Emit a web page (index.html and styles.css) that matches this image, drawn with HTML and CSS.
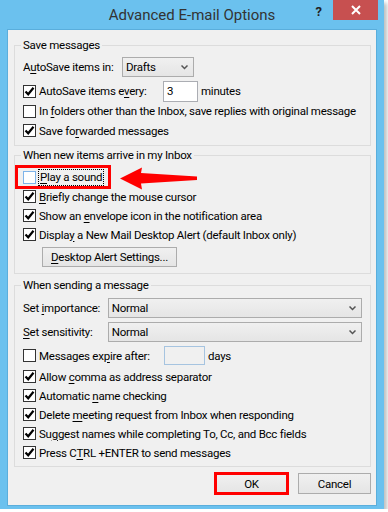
FILE: index.html
```html
<!DOCTYPE html>
<html lang="en">
<head>
  <meta charset="UTF-8">
  <meta name="viewport" content="width=device-width, initial-scale=1.0">
  <title>Advanced E-mail Options</title>
  <link rel="stylesheet" href="styles.css">
</head>
<body>
  <div class="window">
    <div class="titlebar">
      <div class="side"></div>
      <div class="title">Advanced E-mail Options</div>
      <div class="side side-right">
        <span class="help">?</span>
        <span class="close">
          <svg width="10" height="10" viewBox="0 0 10 10"><path d="M1 1 L9 9 M9 1 L1 9" stroke="#fff" stroke-width="2"/></svg>
        </span>
      </div>
    </div>

    <div class="client">
      <!-- Save messages -->
      <fieldset class="group g-save">
        <legend>Save messages</legend>
        <div class="row r-combo">
          <span class="lbl lbl-autosave">A<u>u</u>toSave items in:</span>
          <div class="select s-drafts">Drafts
            <svg class="chev" width="7" height="5" viewBox="0 0 7 5"><path d="M0.5 0.5 L3.5 3.5 L6.5 0.5" fill="none" stroke="#555" stroke-width="1.5"/></svg>
          </div>
        </div>
        <div class="row r-check r-every">
          <span class="cb on"><svg width="11" height="11" viewBox="0 0 11 11"><path d="M1.5 5.5 L4.2 8.3 L9.5 1.8" fill="none" stroke="#000" stroke-width="2.2"/></svg></span>
          <span class="lbl lbl-every">AutoSave items e<u>v</u>ery:</span>
          <div class="input i-every">3</div>
          <span class="after">minutes</span>
        </div>
        <div class="row r-check">
          <span class="cb"></span>
          <span>In <u>f</u>olders other than the Inbox, save replies with original message</span>
        </div>
        <div class="row r-check r-last">
          <span class="cb on"><svg width="11" height="11" viewBox="0 0 11 11"><path d="M1.5 5.5 L4.2 8.3 L9.5 1.8" fill="none" stroke="#000" stroke-width="2.2"/></svg></span>
          <span>Save fo<u>r</u>warded messages</span>
        </div>
      </fieldset>

      <!-- New items -->
      <fieldset class="group g-new">
        <legend>When new items arrive in my Inbox</legend>
        <div class="row r-check r-play">
          <span class="cb focus"></span>
          <span class="focus-lbl"><u>P</u>lay a sound</span>
          <span class="mark"></span>
          <svg class="arrow" width="78" height="25" viewBox="0 0 78 25"><path d="M0 12.5 L22 1.5 L21 7 L77 10.5 L77 14 L21 17.5 L22 23.5 Z" fill="#f00"/></svg>
        </div>
        <div class="row r-check">
          <span class="cb on"><svg width="11" height="11" viewBox="0 0 11 11"><path d="M1.5 5.5 L4.2 8.3 L9.5 1.8" fill="none" stroke="#000" stroke-width="2.2"/></svg></span>
          <span><u>B</u>riefly change the mouse cursor</span>
        </div>
        <div class="row r-check">
          <span class="cb on"><svg width="11" height="11" viewBox="0 0 11 11"><path d="M1.5 5.5 L4.2 8.3 L9.5 1.8" fill="none" stroke="#000" stroke-width="2.2"/></svg></span>
          <span>Show an <u>e</u>nvelope icon in the notification area</span>
        </div>
        <div class="row r-check">
          <span class="cb on"><svg width="11" height="11" viewBox="0 0 11 11"><path d="M1.5 5.5 L4.2 8.3 L9.5 1.8" fill="none" stroke="#000" stroke-width="2.2"/></svg></span>
          <span>Displa<u>y</u> a New Mail Desktop Alert (default Inbox only)</span>
        </div>
        <button class="btn btn-alert"><u>D</u>esktop Alert Settings...</button>
      </fieldset>

      <!-- Sending -->
      <fieldset class="group g-send">
        <legend>When sending a message</legend>
        <div class="row r-combo r-imp">
          <span class="lbl lbl-set">Set <u>i</u>mportance:</span>
          <div class="select s-wide">Normal
            <svg class="chev" width="7" height="5" viewBox="0 0 7 5"><path d="M0.5 0.5 L3.5 3.5 L6.5 0.5" fill="none" stroke="#555" stroke-width="1.5"/></svg>
          </div>
        </div>
        <div class="row r-combo r-sens">
          <span class="lbl lbl-set"><u>S</u>et sensitivity:</span>
          <div class="select s-wide">Normal
            <svg class="chev" width="7" height="5" viewBox="0 0 7 5"><path d="M0.5 0.5 L3.5 3.5 L6.5 0.5" fill="none" stroke="#555" stroke-width="1.5"/></svg>
          </div>
        </div>
        <div class="row r-check r-expire">
          <span class="cb"></span>
          <span class="lbl lbl-expire">Messages ex<u>p</u>ire after:</span>
          <div class="input i-expire"></div>
          <span class="after">days</span>
        </div>
        <div class="row r-check r-allow">
          <span class="cb on"><svg width="11" height="11" viewBox="0 0 11 11"><path d="M1.5 5.5 L4.2 8.3 L9.5 1.8" fill="none" stroke="#000" stroke-width="2.2"/></svg></span>
          <span>Allow <u>c</u>omma as address separator</span>
        </div>
        <div class="row r-check">
          <span class="cb on"><svg width="11" height="11" viewBox="0 0 11 11"><path d="M1.5 5.5 L4.2 8.3 L9.5 1.8" fill="none" stroke="#000" stroke-width="2.2"/></svg></span>
          <span>Automatic <u>n</u>ame checking</span>
        </div>
        <div class="row r-check">
          <span class="cb on"><svg width="11" height="11" viewBox="0 0 11 11"><path d="M1.5 5.5 L4.2 8.3 L9.5 1.8" fill="none" stroke="#000" stroke-width="2.2"/></svg></span>
          <span>Delete <u>m</u>eeting request from Inbox when responding</span>
        </div>
        <div class="row r-check">
          <span class="cb on"><svg width="11" height="11" viewBox="0 0 11 11"><path d="M1.5 5.5 L4.2 8.3 L9.5 1.8" fill="none" stroke="#000" stroke-width="2.2"/></svg></span>
          <span>Su<u>g</u>gest names while completing To, Cc, and Bcc fields</span>
        </div>
        <div class="row r-check">
          <span class="cb on"><svg width="11" height="11" viewBox="0 0 11 11"><path d="M1.5 5.5 L4.2 8.3 L9.5 1.8" fill="none" stroke="#000" stroke-width="2.2"/></svg></span>
          <span>Press C<u>T</u>RL +ENTER to send messages</span>
        </div>
      </fieldset>

      <div class="buttons">
        <button class="btn btn-ok">OK</button>
        <button class="btn">Cancel</button>
      </div>
    </div>
  </div>
</body>
</html>
```

FILE: styles.css
```css
* { box-sizing: border-box; }

body {
  margin: 0;
  background: #fff;
  font-family: Roboto, "Liberation Sans", sans-serif;
  font-size: 11.5px;
  letter-spacing: -0.25px;
  color: #000;
}

u { text-underline-offset: 2px; }

/* window frame */
.window {
  width: 384px;
  height: 509px;
  background: #6bc1ee;
  display: flex;
  flex-direction: column;
  box-shadow: 3px 3px 4px rgba(0, 0, 0, 0.25);
}

.titlebar {
  height: 29px;
  display: flex;
  flex-shrink: 0;
}

.side { flex: 1 1 0; }

.side-right {
  display: flex;
  justify-content: flex-end;
  align-items: flex-start;
}

.title {
  font-size: 15px;
  letter-spacing: 0;
  color: #333;
  line-height: 30px;
  white-space: nowrap;
}

.help {
  font-size: 13px;
  font-weight: bold;
  letter-spacing: 0;
  color: #222;
  margin: 5px 11px 0 0;
  line-height: 14px;
}

.close {
  width: 45px;
  height: 20px;
  margin-right: 6px;
  background: #c75050;
  display: flex;
  align-items: center;
  justify-content: center;
}

/* client area */
.client {
  flex: 1;
  margin: 0 7px 3px 7px;
  border: 1px solid #5aaedc;
  background: #f0f0f0;
  padding: 7px 5px 0 6px;
}

.group {
  margin: 0;
  border: 1px solid #dcdcdc;
  padding: 0 8px 5px 8px;
  min-width: 0;
}

.group legend {
  padding: 0 2px;
  margin-left: -2px;
  line-height: 16px;
}

.g-new { margin-top: 1px; padding-bottom: 6px; }
.g-send { margin-top: 3px; padding-bottom: 4px; }

.row {
  display: flex;
  align-items: center;
  height: 19px;
  white-space: nowrap;
}

.r-combo { height: 20px; margin-top: 4px; }
.r-every { height: 20px; margin-top: 4px; }
.g-save .r-check { height: 20px; }
.g-save .r-last { height: 19px; }
.r-play { height: 20px; margin-top: 4px; position: relative; }
.r-imp { margin-top: 5px; }
.r-expire { margin-top: 4px; }
.r-allow { margin-top: 2px; }

/* checkbox */
.cb {
  width: 13px;
  height: 13px;
  border: 1px solid #333;
  background: #fff;
  margin-right: 3px;
  flex-shrink: 0;
  display: flex;
  align-items: center;
  justify-content: center;
}

.cb.focus { border-color: #7eb4ea; }

.focus-lbl {
  outline: 1px dotted #000;
  padding: 0 1px;
  line-height: 15px;
}

.lbl-autosave { width: 99px; }
.lbl-every { width: 124px; }
.lbl-set { width: 85px; }
.lbl-expire { width: 125px; }

.select {
  height: 20px;
  border: 1px solid #acacac;
  background: linear-gradient(#f0f0f0, #e5e5e5);
  display: flex;
  align-items: center;
  justify-content: space-between;
  padding: 0 5px 0 3px;
}

.s-drafts { width: 72px; }
.s-wide { width: 255px; }

.chev { margin-top: 1px; }

.input {
  height: 21px;
  width: 35px;
  border: 1px solid #abadb3;
  background: #fff;
  padding: 0 3px;
  line-height: 19px;
}

.i-expire {
  width: 41px;
  height: 19px;
  border-color: #a6c4e0;
  background: #f0f0f0;
}

.after { margin-left: 3px; }

/* buttons */
.btn {
  font: inherit;
  letter-spacing: inherit;
  color: #000;
  height: 21px;
  border: 1px solid #acacac;
  background: linear-gradient(#f0f0f0, #e5e5e5);
  padding: 0;
}

.btn-alert {
  display: block;
  width: 135px;
  height: 20px;
  margin: 3px 0 0 19px;
}

.buttons {
  display: flex;
  justify-content: flex-end;
  gap: 10px;
  margin-top: 6px;
}

.buttons .btn { width: 73px; }

.btn-ok {
  outline: 3px solid #f00;
  outline-offset: -2px;
}

/* annotation */
.mark {
  position: absolute;
  left: -8px;
  top: -2px;
  width: 96px;
  height: 24px;
  border: 3px solid #f00;
}

.arrow {
  position: absolute;
  left: 97px;
  top: -1px;
}
```
